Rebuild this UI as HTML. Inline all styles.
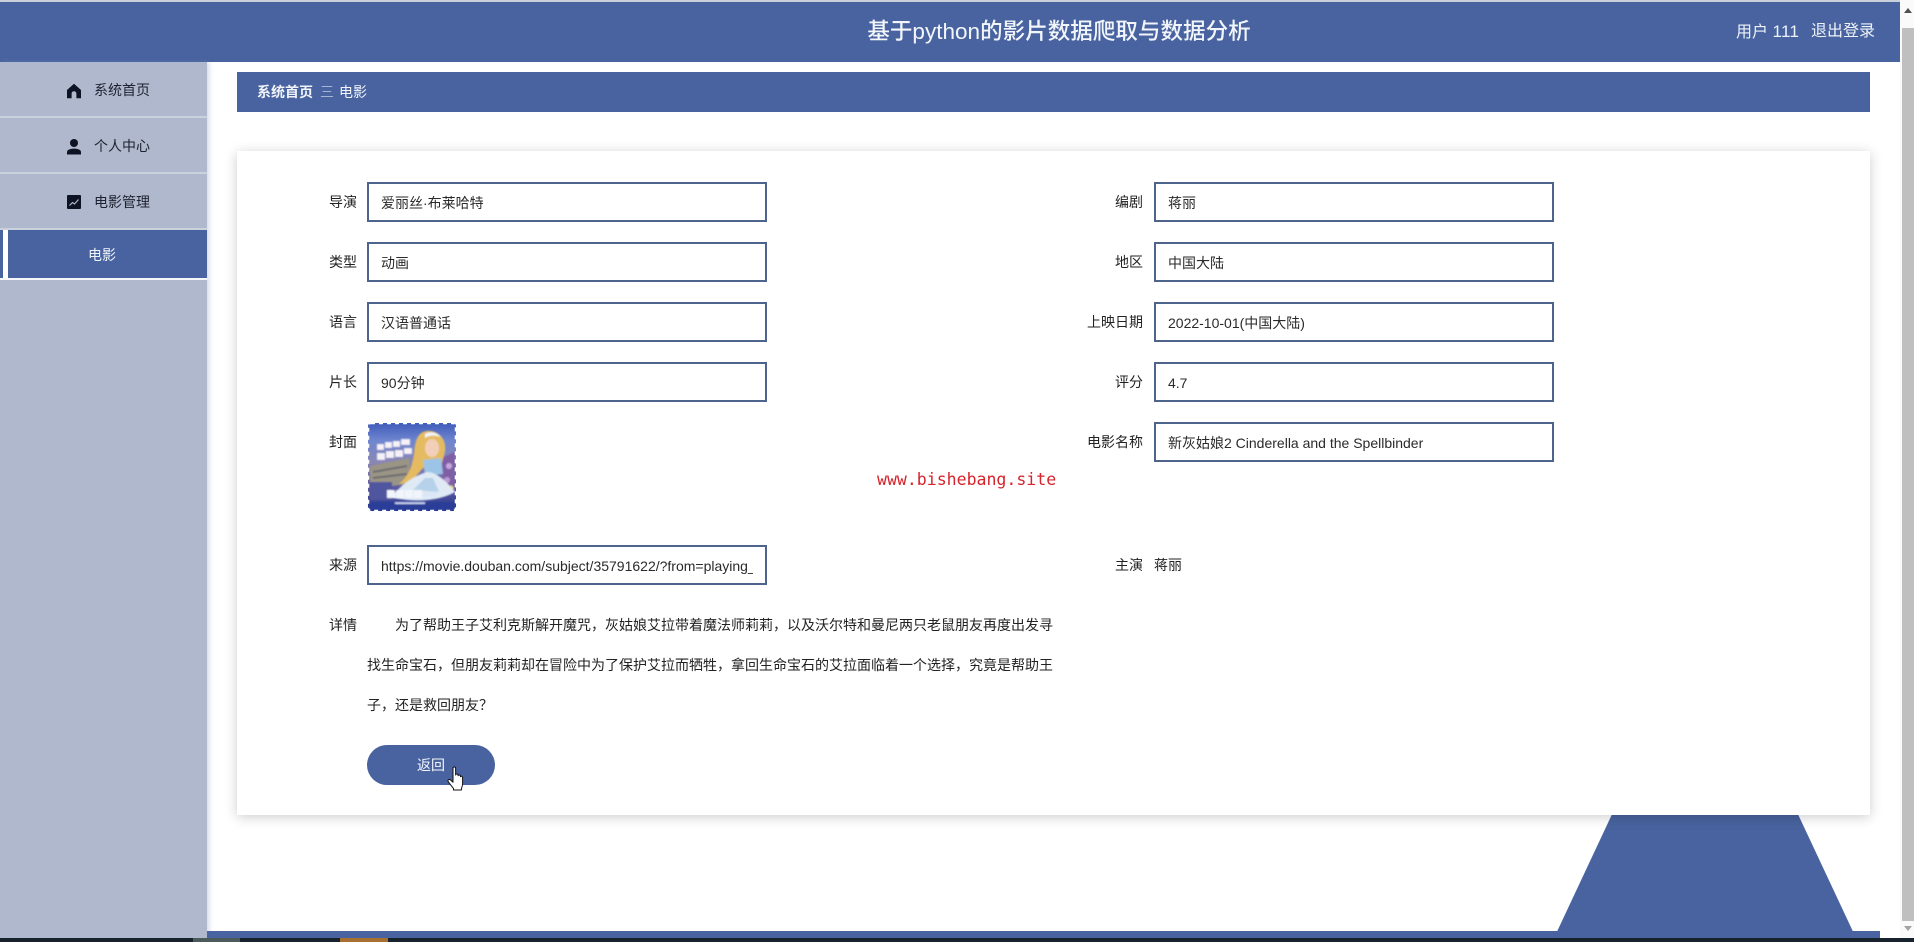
<!DOCTYPE html>
<html lang="zh-CN">
<head>
<meta charset="utf-8">
<title>基于python的影片数据爬取与数据分析</title>
<style>
*{box-sizing:border-box;margin:0;padding:0}
html,body{width:1914px;height:942px;overflow:hidden;background:#fff}
body{position:relative;font-family:"Liberation Sans","Noto Sans CJK SC",sans-serif;font-size:14px;color:#222}
.a{position:absolute;white-space:nowrap}
.header{left:0;top:2px;width:1900px;height:60px;background:#48639f}
.topline{left:0;top:0;width:1900px;height:2px;background:#c9cfdb}
.title{left:700px;width:718px;top:2px;height:60px;line-height:60px;text-align:center;color:#f2f6fb;font-size:22.55px;font-weight:500}
.side{left:0;top:62px;width:207px;height:876px;background:#afb8cc;box-shadow:2px 0 5px rgba(120,140,190,.35)}
.sl{left:0;width:207px;height:2px;background:#c9d0de}
.mi{left:94px;width:60px;height:24px;line-height:24px;color:#1e2230;font-size:14px}
.active{left:8px;top:230px;width:199px;height:48px;background:#48639f}
.crumb{left:237px;top:72px;width:1633px;height:40px;background:#48639f}
.cw{color:#f1f5fa;line-height:24px;height:24px;top:80px}
.card{left:237px;top:151px;width:1633px;height:664px;background:#fff;box-shadow:0 2px 12px rgba(0,0,0,.2);z-index:2}
.trap{left:1553px;top:810px;z-index:1}
.foot{left:207px;top:931px;width:1673px;height:7px;background:#48639f}
.lb{z-index:3;width:60px;text-align:right;height:24px;line-height:24px;color:#222}
.in{z-index:3;height:40px;line-height:36px;padding-top:1px;border:2px solid #4f648c;background:#fff;padding-left:12px;color:#2a2a2a;overflow:hidden}
.l{left:367px;width:400px}
.r{left:1154px;width:400px}
.ll{left:297px}
.rl{left:1083px}
.det{z-index:3;left:367px;height:40px;line-height:40px;color:#222}
.btn{z-index:3;left:367px;top:745px;width:128px;height:40px;border-radius:20px;background:#48639f;color:#f4f8fc;text-align:center;line-height:40px}
.mark{z-index:4;left:877px;top:468px;height:24px;line-height:24px;font-family:"DejaVu Sans Mono",monospace;font-size:16.55px;color:#d6242c}
.scroll{left:1900px;top:0;width:14px;height:942px;background:#fafafa}
.thumb{left:1902px;top:28px;width:12px;height:893px;background:#bfbfbf}
.task{left:0;top:938px;width:1914px;height:4px;background:#18222c}
</style>
</head>
<body>
<div class="a topline"></div>
<div class="a header"></div>
<div class="a title">基于python的影片数据爬取与数据分析</div>
<div class="a" style="left:1736px;top:20px;line-height:24px;font-size:16px;color:#eef3fa">用户 <span style="font-size:17px;letter-spacing:.3px">111</span></div>
<div class="a" style="left:1811px;top:20px;line-height:24px;font-size:16px;color:#eef3fa">退出登录</div>

<div class="a side"></div>
<div class="a sl" style="top:116px"></div>
<div class="a sl" style="top:172px"></div>
<div class="a sl" style="top:228px"></div>
<svg class="a" style="left:66px;top:83px" width="16" height="16" viewBox="0 0 16 16"><path d="M8 .8 1 7v8.2h4.6v-4.6a2.4 2.4 0 0 1 4.8 0v4.6H15V7z" fill="#0d1322"/></svg>
<div class="a mi" style="top:78px">系统首页</div>
<svg class="a" style="left:66px;top:138px" width="16" height="17" viewBox="0 0 16 17"><circle cx="8" cy="5" r="4" fill="#0d1322"/><path d="M1 16.5v-2.4C1 11.6 4.5 10.6 8 10.6s7 1 7 3.5v2.4z" fill="#0d1322"/></svg>
<div class="a mi" style="top:134px">个人中心</div>
<svg class="a" style="left:67px;top:195px" width="14" height="14" viewBox="0 0 14 14"><rect width="14" height="14" rx="1" fill="#0d1322"/><path d="M2.5 10.5 5.5 7.5 7.5 9 11.5 4.5" fill="none" stroke="#aeb8cc" stroke-width="1.2"/></svg>
<div class="a mi" style="top:190px">电影管理</div>
<div class="a" style="left:0;top:230px;width:3px;height:48px;background:#48639f"></div>
<div class="a" style="left:0;top:278px;width:207px;height:2px;background:#f4f6fa"></div>
<div class="a" style="left:3px;top:230px;width:5px;height:48px;background:#fff"></div>
<div class="a active"></div>
<div class="a" style="left:88px;top:243px;line-height:24px;color:#f1f5fa">电影</div>

<div class="a crumb"></div>
<div class="a cw" style="left:257px;font-weight:bold">系统首页</div>
<div class="a cw" style="left:320px;font-weight:300;opacity:.85">三</div>
<div class="a cw" style="left:339px">电影</div>

<svg class="a trap" width="310" height="128" viewBox="0 0 310 128"><polygon points="61,0 243,0 303,128 1,128" fill="#48639f"/></svg>
<div class="a foot"></div>
<div class="a card"></div>

<div class="a lb ll" style="top:190px">导演</div><div class="a in l" style="top:182px">爱丽丝·布莱哈特</div>
<div class="a lb rl" style="top:190px">编剧</div><div class="a in r" style="top:182px">蒋丽</div>
<div class="a lb ll" style="top:250px">类型</div><div class="a in l" style="top:242px">动画</div>
<div class="a lb rl" style="top:250px">地区</div><div class="a in r" style="top:242px">中国大陆</div>
<div class="a lb ll" style="top:310px">语言</div><div class="a in l" style="top:302px">汉语普通话</div>
<div class="a lb rl" style="top:310px">上映日期</div><div class="a in r" style="top:302px">2022-10-01(中国大陆)</div>
<div class="a lb ll" style="top:370px">片长</div><div class="a in l" style="top:362px">90分钟</div>
<div class="a lb rl" style="top:370px">评分</div><div class="a in r" style="top:362px">4.7</div>
<div class="a lb ll" style="top:430px">封面</div>
<svg class="a" style="left:367px;top:422px;z-index:3" width="90" height="90" viewBox="0 0 90 90">
<defs>
<linearGradient id="g" x1="0" y1="0" x2="0" y2="1"><stop offset="0" stop-color="#3f5cba"/><stop offset=".2" stop-color="#6f86cf"/><stop offset=".45" stop-color="#8a86b4"/><stop offset=".72" stop-color="#5f5aa0"/><stop offset="1" stop-color="#27398f"/></linearGradient>
<filter id="b"><feGaussianBlur stdDeviation=".8"/></filter>
</defs>
<rect x="1" y="1" width="88" height="88" rx="3" fill="url(#g)"/>
<g filter="url(#b)">
<path d="M3 44 42 36 44 62 3 66Z" fill="#9a9484"/>
<path d="M6 50 40 44M6 56 40 52" stroke="#6c6a72" stroke-width="2"/>
<path d="M74 36 88 30 88 70 76 64Z" fill="#7e5fa6"/>
<circle cx="82" cy="44" r="3" fill="#c8a8dc"/><circle cx="80" cy="58" r="3" fill="#bd9ad2"/><circle cx="84" cy="66" r="2.5" fill="#e8d76a"/>
<path d="M60 9C50 10 48 20 47 32 45 44 42 54 32 62L44 60 56 46 74 44 78 30C80 18 72 8 60 9Z" fill="#e5bb62"/>
<ellipse cx="65" cy="26" rx="7" ry="9" fill="#f2cfb8"/>
<path d="M58 12C62 9 70 10 74 15 68 13 62 13 58 16Z" fill="#f2f4fa"/>
<path d="M56 38 74 36 76 52 58 54Z" fill="#9cc4e6"/>
<path d="M24 76C32 64 46 54 60 50 70 50 80 60 88 70 78 76 60 80 40 78Z" fill="#dfeaf5"/>
<path d="M46 68 58 56 66 56 72 70Z" fill="#b6d2ea"/>
<g fill="#f6f1f6">
<rect x="10" y="22" width="7" height="6"/><rect x="18" y="20" width="7" height="6"/><rect x="26" y="19" width="7" height="6"/><rect x="34" y="17" width="9" height="6"/>
<rect x="10" y="31" width="8" height="7"/><rect x="19" y="29" width="8" height="7"/><rect x="28" y="28" width="8" height="7"/><rect x="37" y="26" width="8" height="6"/>
</g>
<rect x="3" y="60" width="22" height="18" fill="#4f559e"/>
<rect x="2" y="80" width="86" height="8" fill="#2b3c98"/>
<g fill="#f2f5fc"><rect x="20" y="68" width="8" height="8"/><rect x="29" y="68" width="8" height="8"/><rect x="38" y="68" width="8" height="8"/><rect x="47" y="68" width="8" height="8"/><rect x="56" y="70" width="14" height="5" fill="#dce6f6"/></g>
<rect x="28" y="80" width="30" height="2" fill="#c8d4ee"/>
</g>
<rect x="1" y="1" width="88" height="88" rx="3" fill="none" stroke="#fff" stroke-width="2.5" stroke-dasharray="4 4"/>
</svg>
<div class="a lb rl" style="top:430px">电影名称</div><div class="a in r" style="top:422px">新灰姑娘2 Cinderella and the Spellbinder</div>
<div class="a lb ll" style="top:553px">来源</div><div class="a in l" style="top:545px;padding-right:12px"><span style="display:block;width:372px;overflow:hidden">https://movie.douban.com/subject/35791622/?from=playing_poster</span></div>
<div class="a lb rl" style="top:553px">主演</div><div class="a" style="z-index:3;left:1154px;top:553px;line-height:24px">蒋丽</div>
<div class="a lb ll" style="top:613px">详情</div>
<div class="a det" style="top:605px;left:395px">为了帮助王子艾利克斯解开魔咒，灰姑娘艾拉带着魔法师莉莉，以及沃尔特和曼尼两只老鼠朋友再度出发寻</div>
<div class="a det" style="top:645px">找生命宝石，但朋友莉莉却在冒险中为了保护艾拉而牺牲，拿回生命宝石的艾拉面临着一个选择，究竟是帮助王</div>
<div class="a det" style="top:685px">子，还是救回朋友？</div>
<div class="a btn">返回</div>
<svg class="a" style="left:447px;top:766px;z-index:5" width="18" height="26" viewBox="0 0 18 26"><path d="M6 2.2c0-1.6 2.6-1.6 2.6 0V9c.2-1.3 2.4-1.3 2.5 0v.8c.3-1.2 2.3-1.1 2.4.2v.8c.5-.9 2.1-.6 2.1.7v6.5c0 1.6-.6 2.8-1 4l-.2 2H6.5v-1.5C5 20.5 2 17 1.2 15.5c-.8-1.6.9-2.8 2.2-1.6L6 16.2Z" fill="#fff" stroke="#111" stroke-width="1" stroke-linejoin="round"/></svg>
<div class="a mark">www.bishebang.site</div>

<div class="a scroll"></div>
<div class="a thumb"></div>
<svg class="a" style="left:1902px;top:7px" width="12" height="8" viewBox="0 0 12 8"><path d="M6 1 10 6H2Z" fill="#505050"/></svg>
<svg class="a" style="left:1902px;top:925px" width="12" height="8" viewBox="0 0 12 8"><path d="M2 1h8L6 6Z" fill="#a3a3a3"/></svg>
<div class="a task"></div>
<div class="a" style="left:193px;top:938px;width:47px;height:4px;background:#4c5a5a"></div>
<div class="a" style="left:340px;top:938px;width:48px;height:4px;background:#a8702e"></div>
</body>
</html>
